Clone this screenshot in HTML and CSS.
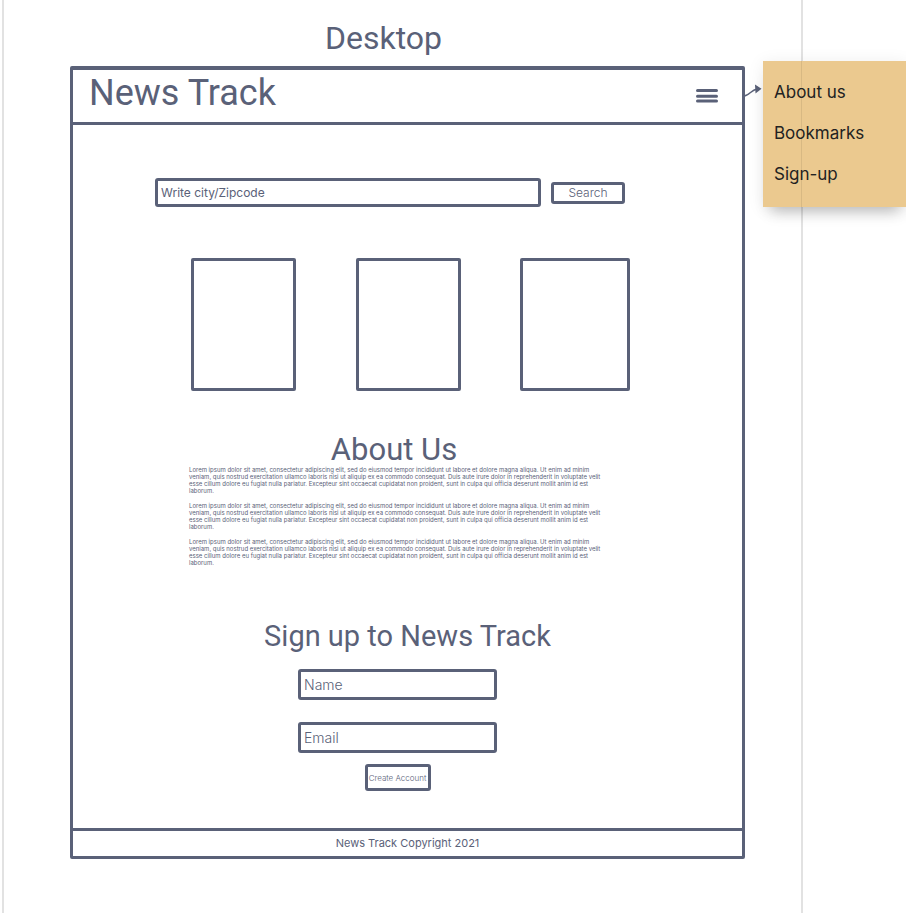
FILE: index.html
```html
<!DOCTYPE html>
<html lang="en">
<head>
<meta charset="utf-8">
<meta name="viewport" content="width=device-width, initial-scale=1">
<title>News Track</title>
<link rel="stylesheet" href="styles.css">
</head>
<body>
<div class="board">
  <h2 class="board-title">Desktop</h2>
  <div class="frame">
    <header class="header">
      <h1 class="brand">News Track</h1>
      <button class="menu-button" type="button" aria-label="Menu">
        <svg width="22" height="15" viewBox="0 0 22 15" fill="none" stroke="currentColor" stroke-width="3" stroke-linecap="round">
          <path d="M1.5 1.5h19M1.5 7.3h19M1.5 12h19"/>
        </svg>
      </button>
    </header>
    <main class="main">
      <form class="search">
        <input class="field search-field" type="text" placeholder="Write city/Zipcode" aria-label="Write city/Zipcode">
        <button class="button search-button" type="button">Search</button>
      </form>
      <div class="cards">
        <div class="card"></div>
        <div class="card"></div>
        <div class="card card-wide"></div>
      </div>
      <section class="about" id="about">
        <h2 class="about-heading">About Us</h2>
        <p>Lorem ipsum dolor sit amet, consectetur adipiscing elit, sed do eiusmod tempor incididunt ut labore et dolore magna aliqua. Ut enim ad minim<br>veniam, quis nostrud exercitation ullamco laboris nisi ut aliquip ex ea commodo consequat. Duis aute irure dolor in reprehenderit in voluptate velit<br>esse cillum dolore eu fugiat nulla pariatur. Excepteur sint occaecat cupidatat non proident, sunt in culpa qui officia deserunt mollit anim id est<br>laborum.</p>
        <p>Lorem ipsum dolor sit amet, consectetur adipiscing elit, sed do eiusmod tempor incididunt ut labore et dolore magna aliqua. Ut enim ad minim<br>veniam, quis nostrud exercitation ullamco laboris nisi ut aliquip ex ea commodo consequat. Duis aute irure dolor in reprehenderit in voluptate velit<br>esse cillum dolore eu fugiat nulla pariatur. Excepteur sint occaecat cupidatat non proident, sunt in culpa qui officia deserunt mollit anim id est<br>laborum.</p>
        <p>Lorem ipsum dolor sit amet, consectetur adipiscing elit, sed do eiusmod tempor incididunt ut labore et dolore magna aliqua. Ut enim ad minim<br>veniam, quis nostrud exercitation ullamco laboris nisi ut aliquip ex ea commodo consequat. Duis aute irure dolor in reprehenderit in voluptate velit<br>esse cillum dolore eu fugiat nulla pariatur. Excepteur sint occaecat cupidatat non proident, sunt in culpa qui officia deserunt mollit anim id est<br>laborum.</p>
      </section>
      <section class="signup" id="sign-up">
        <h2 class="signup-heading">Sign up to News Track</h2>
        <form class="signup-form">
          <input class="field signup-field" type="text" placeholder="Name" aria-label="Name">
          <input class="field signup-field" type="email" placeholder="Email" aria-label="Email">
          <button class="button create-button" type="button">Create Account</button>
        </form>
      </section>
    </main>
    <footer class="footer">News Track Copyright 2021</footer>
    <svg class="arrow" width="18" height="14" viewBox="0 0 18 14">
      <path d="M0 12C5 12 7 6 13 5" fill="none" stroke="currentColor" stroke-width="1.4"/>
      <path d="M11 0.500l6.500 4.200-6 4.800z" fill="currentColor"/>
    </svg>
    <nav class="note" aria-label="Menu">
      <a href="#about">About us</a>
      <a href="#bookmarks">Bookmarks</a>
      <a href="#sign-up">Sign-up</a>
    </nav>
  </div>
</div>
</body>
</html>
```
FILE: styles.css
```css
:root {
  --ink: #5a6178;
}

* {
  box-sizing: border-box;
}

body {
  margin: 0;
  overflow-x: hidden;
  background: #fff;
  color: var(--ink);
  font-family: Inter, "Liberation Sans", sans-serif;
}

h1,
h2,
p {
  margin: 0;
}

h1,
h2 {
  font-family: Roboto, Inter, sans-serif;
  font-weight: 400;
}

.board {
  min-height: 100vh;
  margin: 0 103px 0 2px;
  padding: 17px 56px 40px 66px;
  border: solid #e2e2e2;
  border-width: 0 2px;
}

.board-title {
  padding-right: 48px;
  margin-bottom: 7px;
  font-size: 32px;
  line-height: 42px;
  text-align: center;
}

.frame {
  position: relative;
  border: 3px solid var(--ink);
  border-top-width: 4px;
  border-radius: 2px;
}

.header {
  display: flex;
  align-items: center;
  justify-content: space-between;
  height: 55px;
  padding: 0 24px 0 16px;
  border-bottom: 3px solid var(--ink);
}

.brand {
  padding-bottom: 6px;
  font-size: 36px;
  line-height: 46px;
}

.menu-button {
  display: flex;
  padding: 0;
  border: 0;
  background: none;
  color: inherit;
}

.main {
  padding: 53px 82px 37px;
}

.field,
.button {
  border: 3px solid var(--ink);
  border-radius: 3px;
  background: none;
  color: inherit;
  font-family: inherit;
  font-weight: 300;
}

.field::placeholder {
  color: inherit;
  opacity: 1;
}

.search {
  display: flex;
  align-items: center;
  gap: 10px;
  margin-right: 35px;
}

.search-field {
  flex: 1;
  min-width: 0;
  height: 29px;
  padding: 0 3px;
  font-size: 12px;
  font-weight: 400;
}

.search-button {
  width: 74px;
  height: 22px;
  padding: 0;
  font-size: 12px;
}

.cards {
  display: flex;
  justify-content: space-between;
  margin: 51px 30px 0 36px;
}

.card {
  width: 105px;
  height: 133px;
  border: 3px solid var(--ink);
  border-radius: 2px;
}

.card-wide {
  width: 110px;
}

.about {
  width: 410px;
  margin: 43px 0 0 34px;
  white-space: nowrap;
}

.about-heading {
  font-size: 31px;
  line-height: 32px;
  text-align: center;
}

.about p {
  margin-bottom: 8px;
  font-size: 6px;
  line-height: 7px;
}

.signup {
  display: flex;
  flex-direction: column;
  align-items: center;
  margin-top: 52px;
}

.signup-heading {
  font-size: 29px;
  line-height: 36px;
}

.signup-form {
  display: flex;
  flex-direction: column;
  align-items: center;
  margin: 15px 20px 0 0;
}

.signup-field {
  width: 199px;
  height: 31px;
  margin-bottom: 22px;
  padding: 0 3px;
  font-size: 14px;
}

.create-button {
  width: 66px;
  height: 27px;
  margin-top: -11px;
  padding: 0;
  font-size: 8px;
  white-space: nowrap;
}

.footer {
  border-top: 3px solid var(--ink);
  font-size: 11px;
  line-height: 25px;
  text-align: center;
}

.arrow {
  position: absolute;
  top: 14px;
  left: 100%;
  margin-left: 2px;
}

.note {
  position: absolute;
  top: -9px;
  left: 100%;
  display: flex;
  flex-direction: column;
  gap: 21px;
  width: 144px;
  margin-left: 21px;
  padding: 21px 11px 23px;
  background: linear-gradient(90deg, transparent 38px, #d8b983 38px, #d8b983 39px, transparent 39px), #ebc98f;
  box-shadow: 0 12px 14px -8px rgba(0, 0, 0, 0.25), 0 2px 16px rgba(0, 0, 0, 0.08);
}

.note a {
  color: #222;
  font-size: 17px;
  line-height: 20px;
  text-decoration: none;
}
```
